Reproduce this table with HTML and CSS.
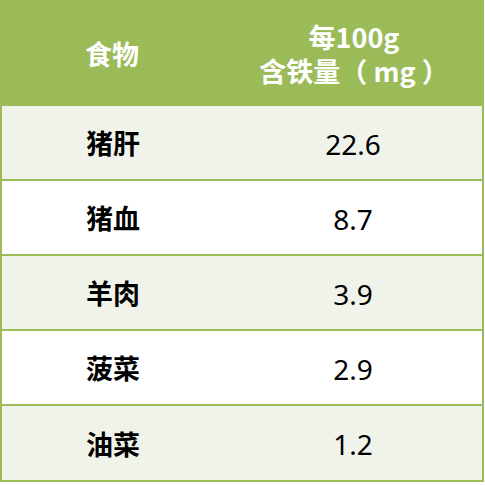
FILE: index.html
```html
<!DOCTYPE html>
<html lang="zh">
<head>
<meta charset="utf-8">
<link rel="stylesheet" href="styles.css">
</head>
<body>
<div class="table">
  <div class="head">
    <div class="cell">食物</div>
    <div class="cell two">每100g<br>含铁量（ mg ）</div>
  </div>
  <div class="row odd"><div class="cell name">猪肝</div><div class="cell num">22.6</div></div>
  <div class="row"><div class="cell name">猪血</div><div class="cell num">8.7</div></div>
  <div class="row odd"><div class="cell name">羊肉</div><div class="cell num">3.9</div></div>
  <div class="row"><div class="cell name">菠菜</div><div class="cell num">2.9</div></div>
  <div class="row odd last"><div class="cell name">油菜</div><div class="cell num">1.2</div></div>
</div>
</body>
</html>
```
FILE: styles.css
```css
html, body {
  margin: 0;
  padding: 0;
  background: #ffffff;
}
.table {
  width: 484px;
  font-family: "Noto Sans CJK SC", sans-serif;
}
.head {
  height: 106px;
  background: #9bbb59;
  color: #ffffff;
  font-weight: 700;
  font-size: 27px;
  display: grid;
  grid-template-columns: 224px 1fr;
}
.cell {
  display: flex;
  align-items: center;
  justify-content: center;
  text-align: center;
}
.head .two {
  line-height: 34px;
  padding-top: 1px;
}
.row {
  height: 73px;
  display: grid;
  grid-template-columns: 222px 1fr;
  border-left: 2px solid #9bbb59;
  border-right: 2px solid #9bbb59;
  border-bottom: 2px solid #9bbb59;
  background: #ffffff;
}
.row.last {
  height: 74px;
}
.row.odd {
  background: #eff3ea;
}
.name {
  font-weight: 700;
  font-size: 27px;
  color: #000000;
}
.num {
  font-family: "Noto Sans", sans-serif;
  font-size: 28px;
  color: #000000;
  padding-top: 2px;
}
```
